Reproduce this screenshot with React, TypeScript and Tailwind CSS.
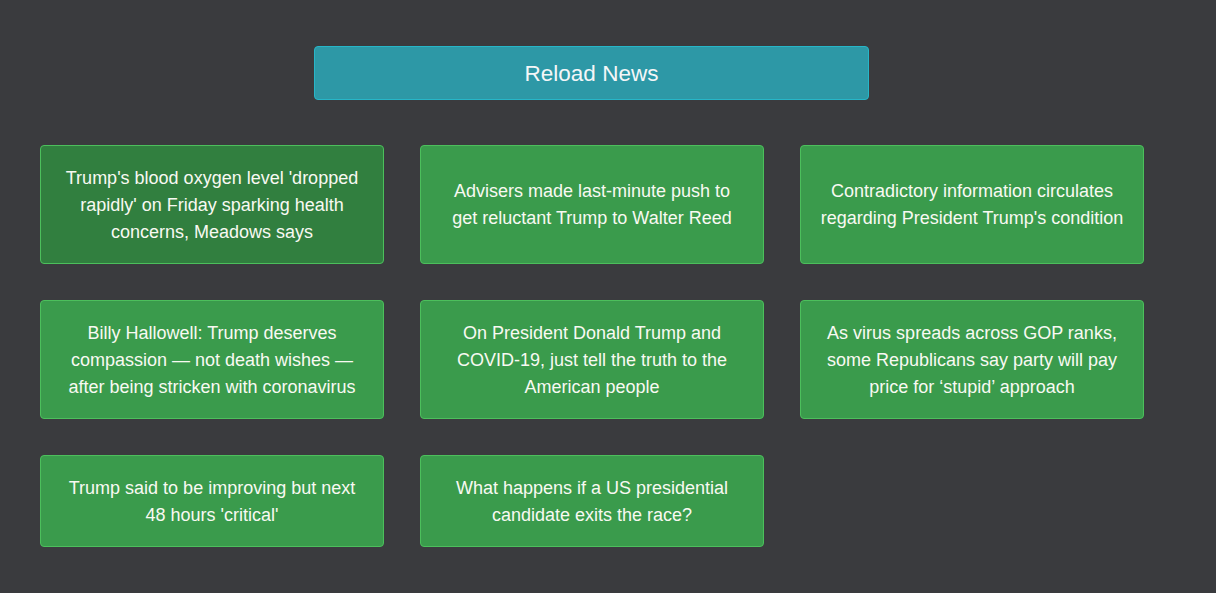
import { useState } from 'react';

const headlines = [
  "Trump's blood oxygen level 'dropped rapidly' on Friday sparking health concerns, Meadows says",
  'Advisers made last-minute push to get reluctant Trump to Walter Reed',
  "Contradictory information circulates regarding President Trump's condition",
  'Billy Hallowell: Trump deserves compassion — not death wishes — after being stricken with coronavirus',
  'On President Donald Trump and COVID-19, just tell the truth to the American people',
  'As virus spreads across GOP ranks, some Republicans say party will pay price for ‘stupid’ approach',
  "Trump said to be improving but next 48 hours 'critical'",
  'What happens if a US presidential candidate exits the race?',
];

export default function App() {
  const [hovered, setHovered] = useState(0);

  return (
    <div
      className="min-h-[593px] bg-[#3a3b3e] pt-[46px] pb-10 px-[40px]"
      style={{ fontFamily: '"Liberation Sans", Arial, sans-serif' }}
    >
      {/* Reload button */}
      <div className="w-[1103px] flex justify-center">
        <button className="w-[555px] h-[54px] pt-[2px] bg-[#2d98a6] border border-[#27b6c8] rounded text-[22.5px] text-[#f4f6f8] cursor-pointer">
          Reload News
        </button>
      </div>

      {/* News grid */}
      <div className="mt-[45px] grid grid-cols-[repeat(3,344px)] gap-9">
        {headlines.map((title, i) => (
          <div
            key={i}
            onMouseEnter={() => setHovered(i)}
            className={
              'flex items-center justify-center text-center px-[19px] pt-[18.5px] pb-[17.5px] rounded border border-[#4cbf5c] text-[18px] leading-[27px] text-[#f8f9f2] cursor-pointer ' +
              (hovered === i ? 'bg-[#317f3f]' : 'bg-[#3a9b4c]')
            }
          >
            {title}
          </div>
        ))}
      </div>
    </div>
  );
}
